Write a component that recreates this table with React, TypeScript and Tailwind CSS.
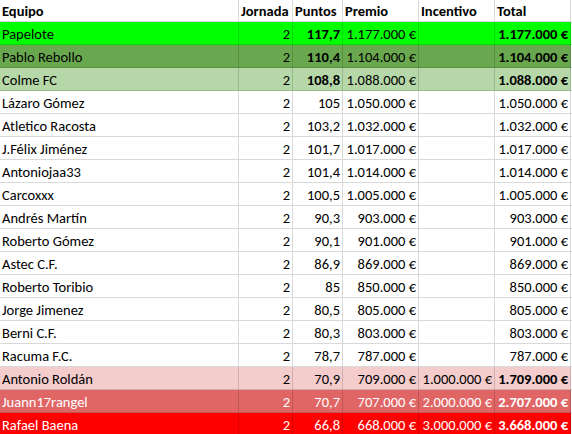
import React from "react";

type Row = {
  equipo: string;
  puntos: string;
  premio: string;
  incentivo?: string;
  total: string;
  bg?: string;
  light?: boolean; // texto blanco
  boldPuntos?: boolean;
  boldTotal?: boolean;
};

const rows: Row[] = [
  { equipo: "Papelote", puntos: "117,7", premio: "1.177.000 €", total: "1.177.000 €", bg: "bg-[#00ff00]", boldPuntos: true, boldTotal: true },
  { equipo: "Pablo Rebollo", puntos: "110,4", premio: "1.104.000 €", total: "1.104.000 €", bg: "bg-[#6aa84f]", boldPuntos: true, boldTotal: true },
  { equipo: "Colme FC", puntos: "108,8", premio: "1.088.000 €", total: "1.088.000 €", bg: "bg-[#b6d7a8]", boldPuntos: true, boldTotal: true },
  { equipo: "Lázaro Gómez", puntos: "105", premio: "1.050.000 €", total: "1.050.000 €" },
  { equipo: "Atletico Racosta", puntos: "103,2", premio: "1.032.000 €", total: "1.032.000 €" },
  { equipo: "J.Félix Jiménez", puntos: "101,7", premio: "1.017.000 €", total: "1.017.000 €" },
  { equipo: "Antoniojaa33", puntos: "101,4", premio: "1.014.000 €", total: "1.014.000 €" },
  { equipo: "Carcoxxx", puntos: "100,5", premio: "1.005.000 €", total: "1.005.000 €" },
  { equipo: "Andrés Martín", puntos: "90,3", premio: "903.000 €", total: "903.000 €" },
  { equipo: "Roberto Gómez", puntos: "90,1", premio: "901.000 €", total: "901.000 €" },
  { equipo: "Astec C.F.", puntos: "86,9", premio: "869.000 €", total: "869.000 €" },
  { equipo: "Roberto Toribio", puntos: "85", premio: "850.000 €", total: "850.000 €" },
  { equipo: "Jorge Jimenez", puntos: "80,5", premio: "805.000 €", total: "805.000 €" },
  { equipo: "Berni C.F.", puntos: "80,3", premio: "803.000 €", total: "803.000 €" },
  { equipo: "Racuma F.C.", puntos: "78,7", premio: "787.000 €", total: "787.000 €" },
  { equipo: "Antonio Roldán", puntos: "70,9", premio: "709.000 €", incentivo: "1.000.000 €", total: "1.709.000 €", bg: "bg-[#f4cccc]", boldTotal: true },
  { equipo: "Juann17rangel", puntos: "70,7", premio: "707.000 €", incentivo: "2.000.000 €", total: "2.707.000 €", bg: "bg-[#e06666]", light: true, boldTotal: true },
  { equipo: "Rafael Baena", puntos: "66,8", premio: "668.000 €", incentivo: "3.000.000 €", total: "3.668.000 €", bg: "bg-[#ff0000]", light: true, boldTotal: true },
];

const cols = "grid grid-cols-[239px_54px_50px_76px_76px_76px_1fr]";
const cell = "border-r border-b border-black/15 px-[2px] flex items-end pb-[1px] whitespace-nowrap overflow-hidden";

export default function App() {
  return (
    <div className="w-[572px] h-[434px] overflow-hidden bg-white text-black text-[14.5px] leading-[18px] font-['Carlito','Calibri','Lato',sans-serif]">
      {/* cabecera */}
      <div className={`${cols} h-[22px] font-bold`}>
        <div className={cell}>Equipo</div>
        <div className={cell}>Jornada</div>
        <div className={cell}>Puntos</div>
        <div className={cell}>Premio</div>
        <div className={cell}>Incentivo</div>
        <div className={cell}>Total</div>
        <div className={cell}></div>
      </div>
      {rows.map((r) => (
        <div key={r.equipo} className={`${cols} h-[23px]`}>
          <div className={`${cell} ${r.bg ?? ""} ${r.light ? "text-white" : ""}`}>{r.equipo}</div>
          <div className={`${cell} justify-end ${r.bg ?? ""} ${r.light ? "text-white" : ""}`}>2</div>
          <div className={`${cell} justify-end ${r.bg ?? ""} ${r.light ? "text-white" : ""} ${r.boldPuntos ? "font-bold" : ""}`}>{r.puntos}</div>
          <div className={`${cell} justify-end ${r.bg ?? ""} ${r.light ? "text-white" : ""}`}>{r.premio}</div>
          <div className={`${cell} justify-end ${r.bg ?? ""} ${r.light ? "text-white" : ""}`}>{r.incentivo ?? ""}</div>
          <div className={`${cell} justify-end ${r.bg ?? ""} ${r.light ? "text-white" : ""} ${r.boldTotal ? "font-bold" : ""}`}>{r.total}</div>
          <div className={cell}></div>
        </div>
      ))}
    </div>
  );
}
